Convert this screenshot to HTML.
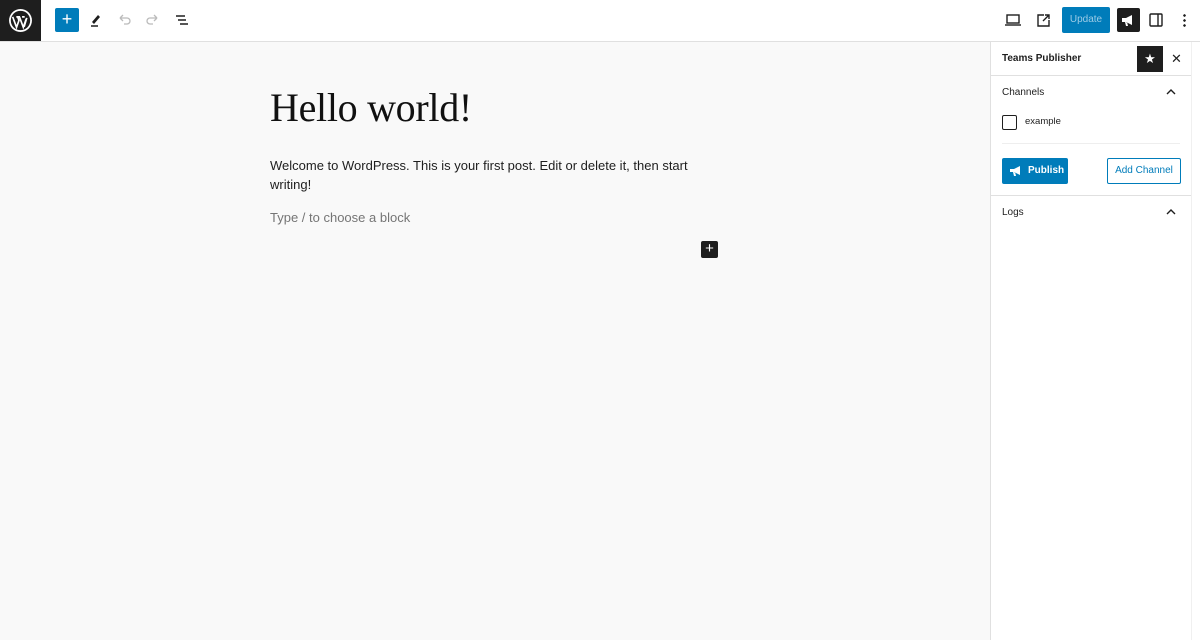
<!DOCTYPE html><html><head><style>
body{margin:0;width:1200px;height:640px;background:#fff;font-family:"Liberation Sans",sans-serif;position:relative;overflow:hidden}
.abs{position:absolute}
.top{left:0;top:0;width:1200px;height:41px;border-bottom:1px solid #e0e0e0;background:#fff}
.canvas{left:0;top:42px;width:990px;height:598px;background:#f9f9f9}
.side{left:990px;top:42px;width:210px;height:598px;background:#fff;border-left:1px solid #e0e0e0}
.t{font-size:10px;color:#1e1e1e}
</style></head><body>
<div class="abs top"></div>
<div class="abs" style="left:0;top:0;width:41px;height:41px;background:#1e1e1e"></div>
<svg class="abs" style="left:8px;top:8px" width="25" height="25" viewBox="0 0 24 24"><circle cx="12" cy="12" r="11" fill="#fff"/><circle cx="12" cy="12" r="9.3" fill="#1e1e1e"/><path d="M4.5 8.5 L8.2 18.5 L10.5 12 L9.3 8.5 M8 8.5h3.5 M11 8.5 L14.7 18.5 L17.5 10.5 M13.5 8.5h2.5 M18 9.5 L15.5 18" stroke="#fff" stroke-width="1.6" fill="none"/></svg>
<div class="abs" style="left:55px;top:8px;width:24px;height:24px;background:#007cba;border-radius:2px;color:#fff;font-size:18px;line-height:23px;text-align:center">+</div>
<svg class="abs" style="left:88px;top:12px" width="16" height="16" viewBox="0 0 16 16"><path d="M4 10 L10 3 L12 5 L6 12 Z" fill="#1e1e1e"/><path d="M3 14h7" stroke="#1e1e1e" stroke-width="1.5"/></svg>
<svg class="abs" style="left:116px;top:12px" width="16" height="16"><path d="M4 6h7a3 3 0 010 6H8M4 6l3-3M4 6l3 3" stroke="#bbb" stroke-width="1.3" fill="none"/></svg>
<svg class="abs" style="left:145px;top:12px" width="16" height="16"><path d="M12 6H5a3 3 0 000 6h3M12 6L9 3M12 6L9 9" stroke="#bbb" stroke-width="1.3" fill="none"/></svg>
<svg class="abs" style="left:174px;top:12px" width="16" height="16"><path d="M2 4h9M4 8h8M6 12h8" stroke="#1e1e1e" stroke-width="1.5"/></svg>
<svg class="abs" style="left:1004px;top:12px" width="18" height="16"><rect x="3" y="3" width="12" height="8" fill="none" stroke="#1e1e1e" stroke-width="1.4"/><path d="M1 13h16" stroke="#1e1e1e" stroke-width="1.4"/></svg>
<svg class="abs" style="left:1035px;top:12px" width="16" height="16"><path d="M9 3H3v11h11V8M8 9l6-6M10 3h4v4" stroke="#1e1e1e" stroke-width="1.4" fill="none"/></svg>
<div class="abs" style="left:1062px;top:7px;width:48px;height:26px;background:#007cba;border-radius:2px;color:#9ccbe6;font-size:10px;line-height:26px;text-align:center">Update</div>
<div class="abs" style="left:1117px;top:8px;width:23px;height:24px;background:#1e1e1e;border-radius:2px"></div>
<svg class="abs" style="left:1120px;top:12px" width="16" height="16"><path d="M2 6h4l6-3v10l-6-3H2z M5 10l1 4h2l-1-4" fill="#fff"/></svg>
<svg class="abs" style="left:1148px;top:12px" width="16" height="16"><rect x="2" y="2" width="12" height="12" rx="1" fill="none" stroke="#1e1e1e" stroke-width="1.4"/><path d="M10 2v12" stroke="#1e1e1e" stroke-width="1.4"/></svg>
<div class="abs" style="left:1183px;top:13px;width:3px;height:14px;background:radial-gradient(circle,#1e1e1e 1.2px,transparent 1.4px) 0 0/3px 5px"></div>
<div class="abs canvas"></div>
<div class="abs" style="left:270px;top:84px;font-family:'Liberation Serif',serif;font-size:40px;color:#111;letter-spacing:-0.3px">Hello world!</div>
<div class="abs" style="left:270px;top:156px;width:440px;font-size:13px;line-height:19px;color:#1e1e1e">Welcome to WordPress. This is your first post. Edit or delete it, then start writing!</div>
<div class="abs" style="left:270px;top:210px;font-size:13px;color:#757575">Type / to choose a block</div>
<div class="abs" style="left:701px;top:241px;width:17px;height:17px;background:#1e1e1e;border-radius:2px;color:#fff;font-size:15px;line-height:16px;text-align:center">+</div>
<div class="abs side"></div>
<div class="abs" style="left:991px;top:75px;width:200px;height:1px;background:#e0e0e0"></div>
<div class="abs" style="left:991px;top:195px;width:200px;height:1px;background:#e0e0e0"></div>
<div class="abs" style="left:1191px;top:42px;width:1px;height:598px;background:#f0f0f0"></div>
<div class="abs t" style="left:1002px;top:53px;font-weight:bold">Teams Publisher</div>
<div class="abs" style="left:1137px;top:46px;width:26px;height:26px;background:#1e1e1e;color:#fff;font-size:13px;line-height:26px;text-align:center">★</div>
<div class="abs" style="left:1171px;top:51px;font-size:13px;color:#1e1e1e">✕</div>
<div class="abs t" style="left:1002px;top:87px">Channels</div>
<svg class="abs" style="left:1165px;top:88px" width="12" height="8"><path d="M2 6l4-4 4 4" stroke="#1e1e1e" stroke-width="1.4" fill="none"/></svg>
<div class="abs" style="left:1002px;top:115px;width:13px;height:13px;border:1px solid #1e1e1e;border-radius:2px"></div>
<div class="abs t" style="left:1025px;top:116px;font-size:9.5px">example</div>
<div class="abs" style="left:1002px;top:143px;width:178px;height:1px;background:#eee"></div>
<div class="abs" style="left:1002px;top:158px;width:66px;height:26px;background:#007cba;border-radius:2px;color:#fff;font-size:10px;font-weight:bold;line-height:26px"><span style="margin-left:26px">Publish</span></div>
<svg class="abs" style="left:1009px;top:164px" width="14" height="14"><path d="M1 5h4l6-3v9l-6-3H1z M4 8l1 4h2l-1-4" fill="#fff"/></svg>
<div class="abs" style="left:1107px;top:158px;width:72px;height:24px;border:1px solid #007cba;border-radius:2px;color:#007cba;font-size:10px;line-height:24px;text-align:center">Add Channel</div>
<div class="abs t" style="left:1002px;top:207px">Logs</div>
<svg class="abs" style="left:1165px;top:208px" width="12" height="8"><path d="M2 6l4-4 4 4" stroke="#1e1e1e" stroke-width="1.4" fill="none"/></svg>
</body></html>
